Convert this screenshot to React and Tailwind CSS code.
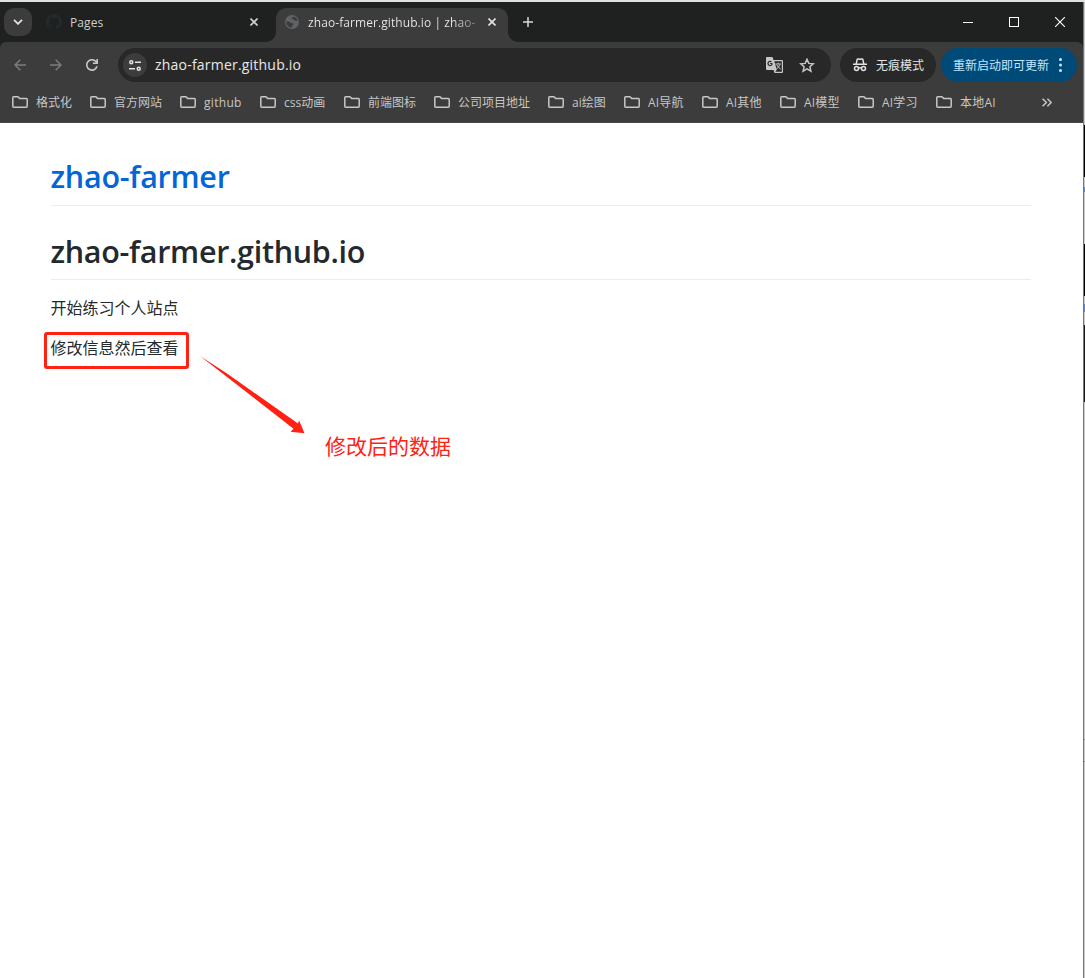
import React from "react";

const ui = "font-['Open_Sans','Noto_Sans_CJK_SC',sans-serif]";

const bookmarks = [
  { label: "格式化", width: "w-[78px]" },
  { label: "官方网站", width: "w-[90px]" },
  { label: "github", width: "w-[80px]", tracking: "tracking-[0.3px]" },
  { label: "css动画", width: "w-[84px]" },
  { label: "前端图标", width: "w-[90px]" },
  { label: "公司项目地址", width: "w-[114px]" },
  { label: "ai绘图", width: "w-[76px]" },
  { label: "AI导航", width: "w-[78px]", tracking: "tracking-[0.2px]" },
  { label: "AI其他", width: "w-[78px]", tracking: "tracking-[0.2px]" },
  { label: "AI模型", width: "w-[78px]", tracking: "tracking-[0.2px]" },
  { label: "AI学习", width: "w-[78px]", tracking: "tracking-[0.2px]" },
  { label: "本地AI", width: "w-[106px]", tracking: "tracking-[0.2px]" },
];

function Folder() {
  return (
    <svg className="mr-2 h-3 w-4 shrink-0" viewBox="0 0 16 12" fill="none" stroke="#c7c7c7" strokeWidth="1.5" strokeLinejoin="round">
      <path d="M.8 10.2V1.6Q.8.8 1.6.8H6l1.6 1.6h6.800q.8 0 .8.8v7q0 1-.9 1H1.6q-.8 0-.8-1Z" />
    </svg>
  );
}

function Close({ className, color }) {
  return (
    <svg className={className} viewBox="0 0 8 8" stroke={color} strokeWidth="1.6">
      <path d="M.5.5l7 7M7.5.5l-7 7" />
    </svg>
  );
}

function TabStrip() {
  return (
    <div className="flex h-10 bg-[#1f2120]">
      <button className="mt-[6px] ml-1 flex h-7 w-7 items-center justify-center rounded-[10px] bg-[#3c3c3c]">
        <svg className="h-[6px] w-[10px]" viewBox="0 0 10 6" fill="none" stroke="#e3e3e3" strokeWidth="1.8">
          <path d="M1 .8l4 4 4-4" />
        </svg>
      </button>
      <div className="flex h-10 w-[234px] items-center pl-[14px]">
        <svg className="h-4 w-4" viewBox="0 0 16 16" fill="#24292f">
          <path d="M8 0C3.58 0 0 3.58 0 8c0 3.54 2.29 6.53 5.47 7.59.4.07.55-.17.55-.38 0-.19-.01-.82-.01-1.49-2.01.37-2.53-.49-2.69-.94-.09-.23-.48-.94-.82-1.13-.28-.15-.68-.52-.01-.53.63-.01 1.08.58 1.23.82.72 1.21 1.87.87 2.33.66.07-.52.28-.87.51-1.07-1.78-.2-3.64-.89-3.64-3.95 0-.87.31-1.59.82-2.15-.08-.2-.36-1.02.08-2.12 0 0 .67-.21 2.2.82.64-.18 1.32-.27 2-.27s1.36.09 2 .27c1.53-1.04 2.2-.82 2.2-.82.44 1.1.16 1.92.08 2.12.51.56.82 1.27.82 2.15 0 3.07-1.87 3.75-3.65 3.95.29.25.54.73.54 1.48 0 1.07-.01 1.93-.01 2.2 0 .21.15.46.55.38A8.01 8.01 0 0 0 16 8c0-4.42-3.58-8-8-8Z" />
        </svg>
        <span className="mt-[2px] ml-2 w-[180px] text-[12px] leading-4 tracking-[0.100px] text-[#cfcfcf]">Pages</span>
        <Close className="h-2 w-2 shrink-0" color="#d0d0d0" />
      </div>
      <div className="w-[10px] bg-[#3c3c3c]">
        <div className="h-10 rounded-br-[10px] bg-[#1f2120]" />
      </div>
      <div className="mt-[6px] flex h-[34px] w-[232px] items-center rounded-t-[10px] bg-[#3c3c3c] pb-[6px] pl-[9px]">
        <svg className="h-[14px] w-[14px] shrink-0" viewBox="0 0 14 14">
          <circle cx="7" cy="7" r="7" fill="#5f6368" />
          <path d="M1.300 6.300l3 .4c1 .2 1.500.8 1.500 1.600h1.600c.8 0 1.200.6 1 1.300-.2.8-1.400.7-1.500 1.600l-.2 1.500A5.600 5.600 0 0 1 1.300 6.300ZM8.400 1.500c-.2 1.200-1.300 1.400-2 1.300-.5.8.1 1.100 1.200 1.200 1 .1 1.100 1.300 2.100 1.600.9.2 1.800.4 2.900.1-.3-2.100-2-3.800-4.200-4.200Z" fill="#3c3c3c" />
        </svg>
        <span className="mt-[2px] ml-[9px] w-[168px] overflow-hidden bg-linear-to-r from-[#ececec] from-[86%] to-transparent to-[106%] bg-clip-text text-[12px] leading-4 tracking-[0.080px] whitespace-nowrap text-transparent">
          zhao-farmer.github.io | zhao-
        </span>
        <Close className="ml-[12px] h-2 w-2 shrink-0" color="#e3e3e3" />
      </div>
      <div className="w-[10px] bg-[#3c3c3c]">
        <div className="h-10 rounded-bl-[10px] bg-[#1f2120]" />
      </div>
      <svg className="mt-[15px] ml-[5px] h-[10px] w-[10px]" viewBox="0 0 10 10" stroke="#d8d8d8" strokeWidth="1.5">
        <path d="M0 5h10M5 0v10" />
      </svg>
      <div className="mt-[14px] ml-auto flex h-3 items-center pr-[18px]">
        <div className="h-px w-[10px] bg-white" />
        <div className="ml-[36px] h-[10px] w-[10px] border border-white" />
        <svg className="ml-[36px] h-[10px] w-[10px]" viewBox="0 0 10 10" stroke="#fff" strokeWidth="1.100">
          <path d="M0 0l10 10M10 0L0 10" />
        </svg>
      </div>
    </div>
  );
}

function Toolbar() {
  return (
    <div className="flex h-[43px] items-center rounded-t-[6px] bg-[#3c3c3c] pt-[3px]">
      <svg className="ml-[14px] h-3 w-3" viewBox="0 0 12 12" fill="none" stroke="#7c7c7c" strokeWidth="1.5">
        <path d="M12 6H1M6.300.7L1 6l5.300 5.300" />
      </svg>
      <svg className="ml-6 h-3 w-3" viewBox="0 0 12 12" fill="none" stroke="#7c7c7c" strokeWidth="1.5">
        <path d="M0 6h11M5.700.7L11 6l-5.300 5.300" />
      </svg>
      <svg className="ml-6 h-3 w-3" viewBox="0 0 12 12" fill="none" stroke="#c7c7c7" strokeWidth="1.6">
        <path d="M11 7.300A5.200 5.200 0 1 1 9.900 2.500L11 3.700M11.200 0v4.300H6.900" />
      </svg>
      <div className="ml-5 flex h-[34px] w-[713px] items-center rounded-full bg-[#282828] pl-[5px]">
        <span className="flex h-6 w-6 items-center justify-center rounded-full bg-[#3c3c3c]">
          <svg className="h-[11px] w-3" viewBox="0 0 12 11" fill="none" stroke="#e3e3e3" strokeWidth="1.5">
            <circle cx="2.300" cy="2.300" r="1.500" />
            <path d="M6 2.300h6M0 8.700h6" />
            <circle cx="9.700" cy="8.700" r="1.500" />
          </svg>
        </span>
        <span className="ml-2 text-[14px] leading-5 tracking-[0.210px] text-[#e8e8e8]">zhao-farmer.github.io</span>
        <svg className="mr-4 ml-auto h-4 w-[17px]" viewBox="0 0 17 16">
          <path d="M1 0h5.500l1 3H16a1 1 0 0 1 1 1v11a1 1 0 0 1-1 1H8.500l-1-3H1a1 1 0 0 1-1-1V1a1 1 0 0 1 1-1Z" fill="#c7c7c7" />
          <path d="M8.300 4.200h7.500v10.600H9.300l1.500-2L8.300 4.200Z" fill="#282828" />
          <path d="M6.200 6.500H4.200M6.200 6.500A2.100 2.100 0 1 1 5.500 4.900" fill="none" stroke="#282828" strokeWidth="1.200" />
          <path d="M9.300 7h5.700M12.200 5.700V7M10.700 7.500q1 3 4 4.500M13.900 7.500q-1 3-3.600 4.700" fill="none" stroke="#c7c7c7" strokeWidth="1" />
        </svg>
        <svg className="mr-4 h-[15px] w-4" viewBox="0 0 16 15" fill="none" stroke="#c7c7c7" strokeWidth="1.500">
          <path d="M8 1.300l1.800 4.100 4.500.4-3.400 3 1 4.300L8 10.800l-3.900 2.300 1-4.300-3.400-3 4.500-.4Z" />
        </svg>
      </div>
      <div className="ml-[9px] flex h-[34px] w-24 items-center rounded-full bg-[#282828] pl-[13px]">
        <svg className="h-[14px] w-[14px]" viewBox="0 0 14 14" fill="none" stroke="#e3e3e3" strokeWidth="1.500">
          <path d="M0 6.200h14M3.200 6l.9-4.400q.2-.8 1-.7L7 1.300 8.900.9q.8-.1 1 .7l.9 4.400" />
          <circle cx="3.500" cy="10.500" r="2" />
          <circle cx="10.500" cy="10.500" r="2" />
          <path d="M5.500 10.200q1.500-.8 3 0" />
        </svg>
        <span className="mt-[2px] ml-[9px] text-[12px] leading-4 whitespace-nowrap text-[#e3e3e3]">无痕模式</span>
      </div>
      <div className="ml-[5px] flex h-[34px] w-[136px] items-center rounded-full bg-[#004a77] pl-[12px]">
        <span className="mt-[2px] text-[12px] leading-4 whitespace-nowrap text-[#c2e7ff]">重新启动即可更新</span>
        <svg className="ml-[10px] h-[14px] w-[3px]" viewBox="0 0 3 14" fill="#c2e7ff">
          <circle cx="1.500" cy="1.500" r="1.500" />
          <circle cx="1.500" cy="7" r="1.500" />
          <circle cx="1.500" cy="12.500" r="1.500" />
        </svg>
      </div>
    </div>
  );
}

function Bookmarks() {
  return (
    <div className="flex h-[38px] items-center border-b border-[#484848] bg-[#3c3c3c] pb-[3px] pl-3">
      {bookmarks.map((b) => (
        <div key={b.label} className={`flex shrink-0 items-center ${b.width}`}>
          <Folder />
          <span className={`mt-[2px] text-[12px] leading-4 whitespace-nowrap text-[#c7c7c7] ${b.tracking || ""}`}>{b.label}</span>
        </div>
      ))}
      <svg className="h-[9px] w-[10px]" viewBox="0 0 10 9" fill="none" stroke="#c7c7c7" strokeWidth="1.500">
        <path d="M.6.700l3.800 3.800L.6 8.300M5.400.700l3.800 3.800-3.800 3.800" />
      </svg>
    </div>
  );
}

export default function App() {
  return (
    <div className={`h-[978px] w-[1085px] overflow-hidden bg-[#dfe1e1] pt-[2px] ${ui}`}>
      <div className="flex h-[976px]">
        <div className="w-[1083px] shrink-0 bg-white">
          <div className="bg-[#1f2120]">
            <TabStrip />
            <Toolbar />
            <Bookmarks />
          </div>
          <main className="relative pr-[52px] pl-[51px] text-[#24292e]">
            <h1 className="h-[83px] border-b border-[#eaecef] pt-[31px] indent-[-0.500px] text-[30.500px] leading-[45px] font-semibold tracking-[-0.250px] text-[#0366d6]">
              <a>zhao-farmer</a>
            </h1>
            <h1 className="h-[74px] border-b border-[#eaecef] pt-[23px] indent-[-0.500px] text-[30.500px] leading-[45px] font-semibold tracking-[-0.300px]">zhao-farmer.github.io</h1>
            <p className="mt-4 indent-[-0.500px] text-[16px] leading-6">开始练习个人站点</p>
            <p className="mt-4 indent-[-0.500px] text-[16px] leading-6">修改信息然后查看</p>
            <div className="absolute top-[208.500px] left-[43.500px] h-[37px] w-[145px] rounded-[3px] border-[3px] border-[#ff2213]" />
            <svg className="absolute top-[232px] left-[199px] h-[80px] w-[106px]" viewBox="0 0 106 80" fill="#ff2213">
              <path d="M1 1L28 18.500 99 68.500 100 65.300 105.500 78.300 91.500 76.800 94.500 73.800Z" />
            </svg>
            <p className="absolute top-[307px] left-[325px] text-[21px] leading-8 whitespace-nowrap text-[#ff2213]">修改后的数据</p>
          </main>
        </div>
        <div className="flex w-[2px] shrink-0 flex-col border-l border-[#777777] bg-[#cccccc]">
          <div className="mt-[123px] h-[52px] bg-black" />
          <div className="mt-[10px] h-[5px] bg-[#5b8bc4]" />
          <div className="mt-[52px] h-[52px] bg-black" />
          <div className="mt-[8px] h-[8px] bg-[#5b8bc4]" />
          <div className="mt-[13px] h-[77px] bg-[#151515]" />
          <div className="mt-[337px] h-px bg-[#b57a7a]" />
          <div className="mt-[21px] h-px bg-[#b57a7a]" />
        </div>
      </div>
    </div>
  );
}
